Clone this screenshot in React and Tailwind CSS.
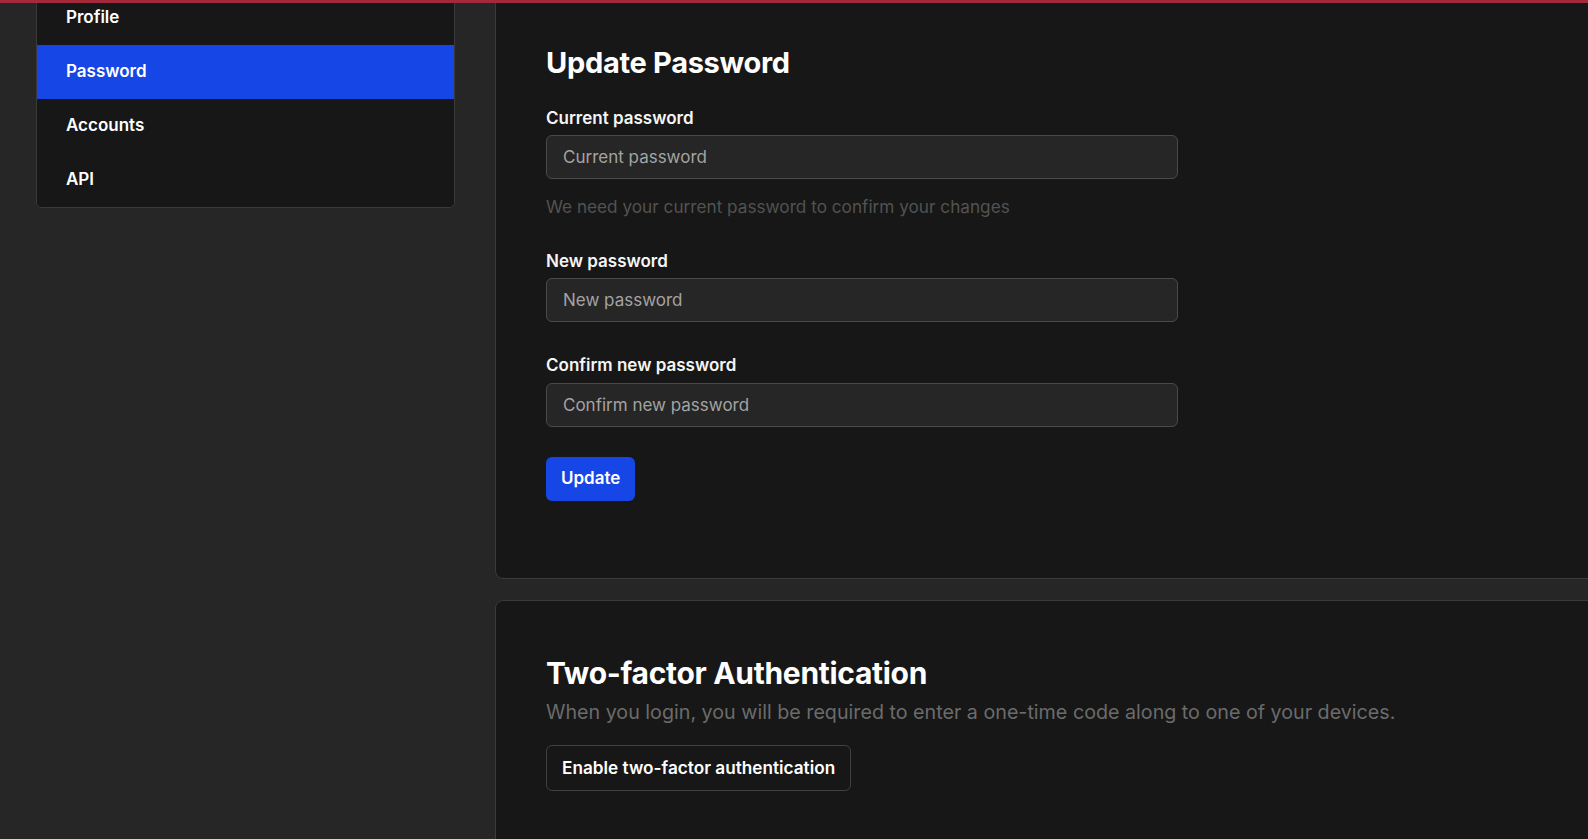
import { useState } from 'react';

const navItems = ['Profile', 'Password', 'Accounts', 'API'];

const Field = ({ label, placeholder, hint }) => (
  <div>
    <label className="block text-[17px] font-semibold text-[#f5f5f5] mb-[4px]">{label}</label>
    <input
      type="password"
      placeholder={placeholder}
      className="w-[632px] h-[44px] rounded-md border border-[#4a4a4a] bg-[#262626] px-4 text-[17px] text-white placeholder:text-[#a3a3a3] focus:outline-none"
    />
    {hint && <p className="mt-[15px] -mb-[2px] text-[17.2px] text-[#525252]">{hint}</p>}
  </div>
);

export default function App() {
  const [active, setActive] = useState('Password');

  return (
    <div className="h-[839px] w-full overflow-hidden bg-[#262626] font-['Inter',sans-serif] flex flex-col">
      <div className="relative z-10 h-[3px] bg-[#a32a3a] shrink-0" />

      <div className="flex gap-[40px] pl-[36px] -mt-[13px]">
        {/* Sidebar */}
        <aside className="w-[419px] shrink-0 self-start rounded-md border border-[#3a3a3a] bg-[#171717] overflow-hidden">
          {navItems.map((item) => (
            <button
              key={item}
              onClick={() => setActive(item)}
              className={`block w-full h-[54px] text-left pl-[29px] text-[17px] font-semibold text-white ${
                active === item ? 'bg-[#1746e6]' : 'bg-[#171717]'
              }`}
            >
              {item}
            </button>
          ))}
        </aside>

        {/* Main */}
        <main className="w-[1120px] shrink-0 flex flex-col gap-[21px]">
          <section className="rounded-lg border border-[#3a3a3a] bg-[#171717] pl-[50px] pt-[50px] pb-[77px]">
            <h2 className="text-[29px] font-bold text-white tracking-[-0.3px]">Update Password</h2>
            <div className="mt-[21px] flex flex-col gap-[31px]">
              <Field
                label="Current password"
                placeholder="Current password"
                hint="We need your current password to confirm your changes"
              />
              <Field label="New password" placeholder="New password" />
              <Field label="Confirm new password" placeholder="Confirm new password" />
            </div>
            <button className="mt-[30px] h-[44px] px-[15px] rounded-md bg-[#1746e6] text-[17px] font-semibold text-white">
              Update
            </button>
          </section>

          <section className="rounded-lg border border-[#3a3a3a] bg-[#171717] pl-[50px] pt-[50px] pb-[60px]">
            <h2 className="text-[30px] font-bold text-white tracking-[-0.3px]">Two-factor Authentication</h2>
            <p className="mt-[2px] text-[19.7px] text-[#6b6b6b]">
              When you login, you will be required to enter a one-time code along to one of your devices.
            </p>
            <button className="mt-[18px] h-[46px] px-[15px] rounded-md border border-[#404040] text-[17.2px] font-semibold text-white">
              Enable two-factor authentication
            </button>
          </section>
        </main>
      </div>
    </div>
  );
}
